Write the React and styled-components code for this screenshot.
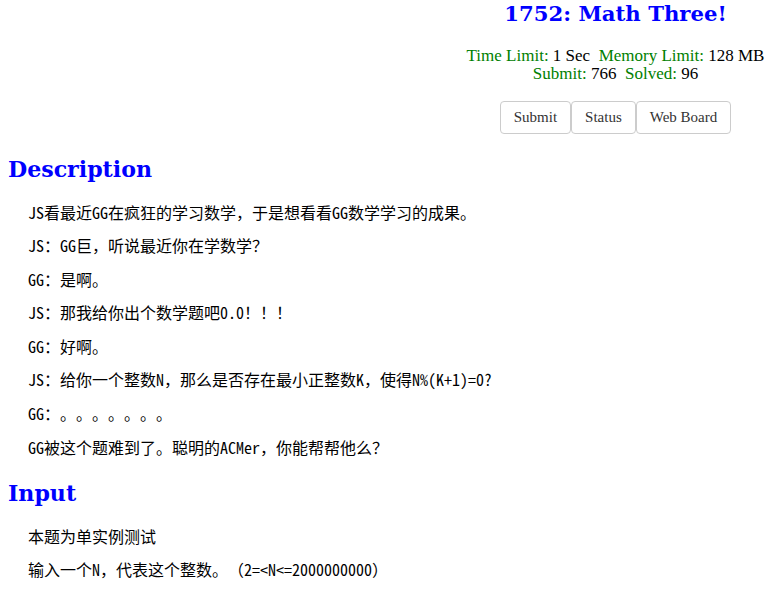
import React from "react";
import styled, { createGlobalStyle } from "styled-components";

const Global = createGlobalStyle`
  html, body { margin: 0; padding: 0; background: #fff; }
  body { font-family: "Liberation Serif", serif; color: #000; }
`;

const Page = styled.div`
  padding: 0 8px;
`;

const Header = styled.header`
  display: flex;
  justify-content: flex-end;
`;

const HeaderBox = styled.div`
  width: 301px;
  display: flex;
  flex-direction: column;
  align-items: center;
  white-space: nowrap;
`;

const Title = styled.h1`
  margin: 2px 0 0;
  font-family: "DejaVu Serif", serif;
  font-weight: bold;
  font-size: 21.2px;
  line-height: 24px;
  color: #0000ff;
`;

const Info = styled.div`
  margin-top: 21px;
  font-family: "Liberation Serif", serif;
  font-size: 17px;
  line-height: 18px;
  text-align: center;
`;

const Label = styled.span`
  color: #008000;
`;

const ButtonRow = styled.div`
  margin-top: 18px;
  display: flex;
`;

const Button = styled.button`
  font-family: "Liberation Serif", serif;
  font-size: 15px;
  line-height: 19px;
  padding: 6px 13px;
  color: #333;
  background: #fff;
  border: 1px solid #ccc;
  border-radius: 4px;
  cursor: pointer;
`;

const SectionTitle = styled.h2`
  margin: ${(p) => p.$top}px 0 20.5px;
  font-family: "DejaVu Serif", serif;
  font-weight: bold;
  font-size: 22.1px;
  line-height: 28px;
  color: #0000ff;
`;

const Content = styled.div`
  padding-left: 20px;
`;

const Para = styled.p`
  margin: 16px 0;
  font-family: "Noto Sans Mono CJK SC", "Noto Sans CJK SC", sans-serif;
  font-size: 16px;
  line-height: 17.6px;
  text-spacing-trim: space-all;
  font-feature-settings: "halt" 0, "chws" 0;
  &:first-child { margin-top: 0; }
  &:last-child { margin-bottom: 0; }
`;

const description = [
  "JS看最近GG在疯狂的学习数学，于是想看看GG数学学习的成果。",
  "JS：GG巨，听说最近你在学数学？",
  "GG：是啊。",
  "JS：那我给你出个数学题吧0.0！！！",
  "GG：好啊。",
  "JS：给你一个整数N，那么是否存在最小正整数K，使得N%(K+1)=0?",
  "GG：。。。。。。。",
  "GG被这个题难到了。聪明的ACMer，你能帮帮他么？",
];

const input = ["本题为单实例测试", "输入一个N，代表这个整数。（2=<N<=2000000000）"];

export default function App() {
  return (
    <Page>
      <Global />
      <Header>
        <HeaderBox>
          <Title>1752: Math Three!</Title>
          <Info>
            <div>
              <Label>Time Limit: </Label>1 Sec&nbsp;&nbsp;<Label>Memory Limit: </Label>128 MB
            </div>
            <div>
              <Label>Submit: </Label>766&nbsp;&nbsp;<Label>Solved: </Label>96
            </div>
          </Info>
          <ButtonRow>
            <Button>Submit</Button>
            <Button>Status</Button>
            <Button>Web Board</Button>
          </ButtonRow>
        </HeaderBox>
      </Header>
      <SectionTitle $top={21}>Description</SectionTitle>
      <Content>
        {description.map((t, i) => (
          <Para key={i}>{t}</Para>
        ))}
      </Content>
      <SectionTitle $top={23}>Input</SectionTitle>
      <Content>
        {input.map((t, i) => (
          <Para key={i}>{t}</Para>
        ))}
      </Content>
    </Page>
  );
}
